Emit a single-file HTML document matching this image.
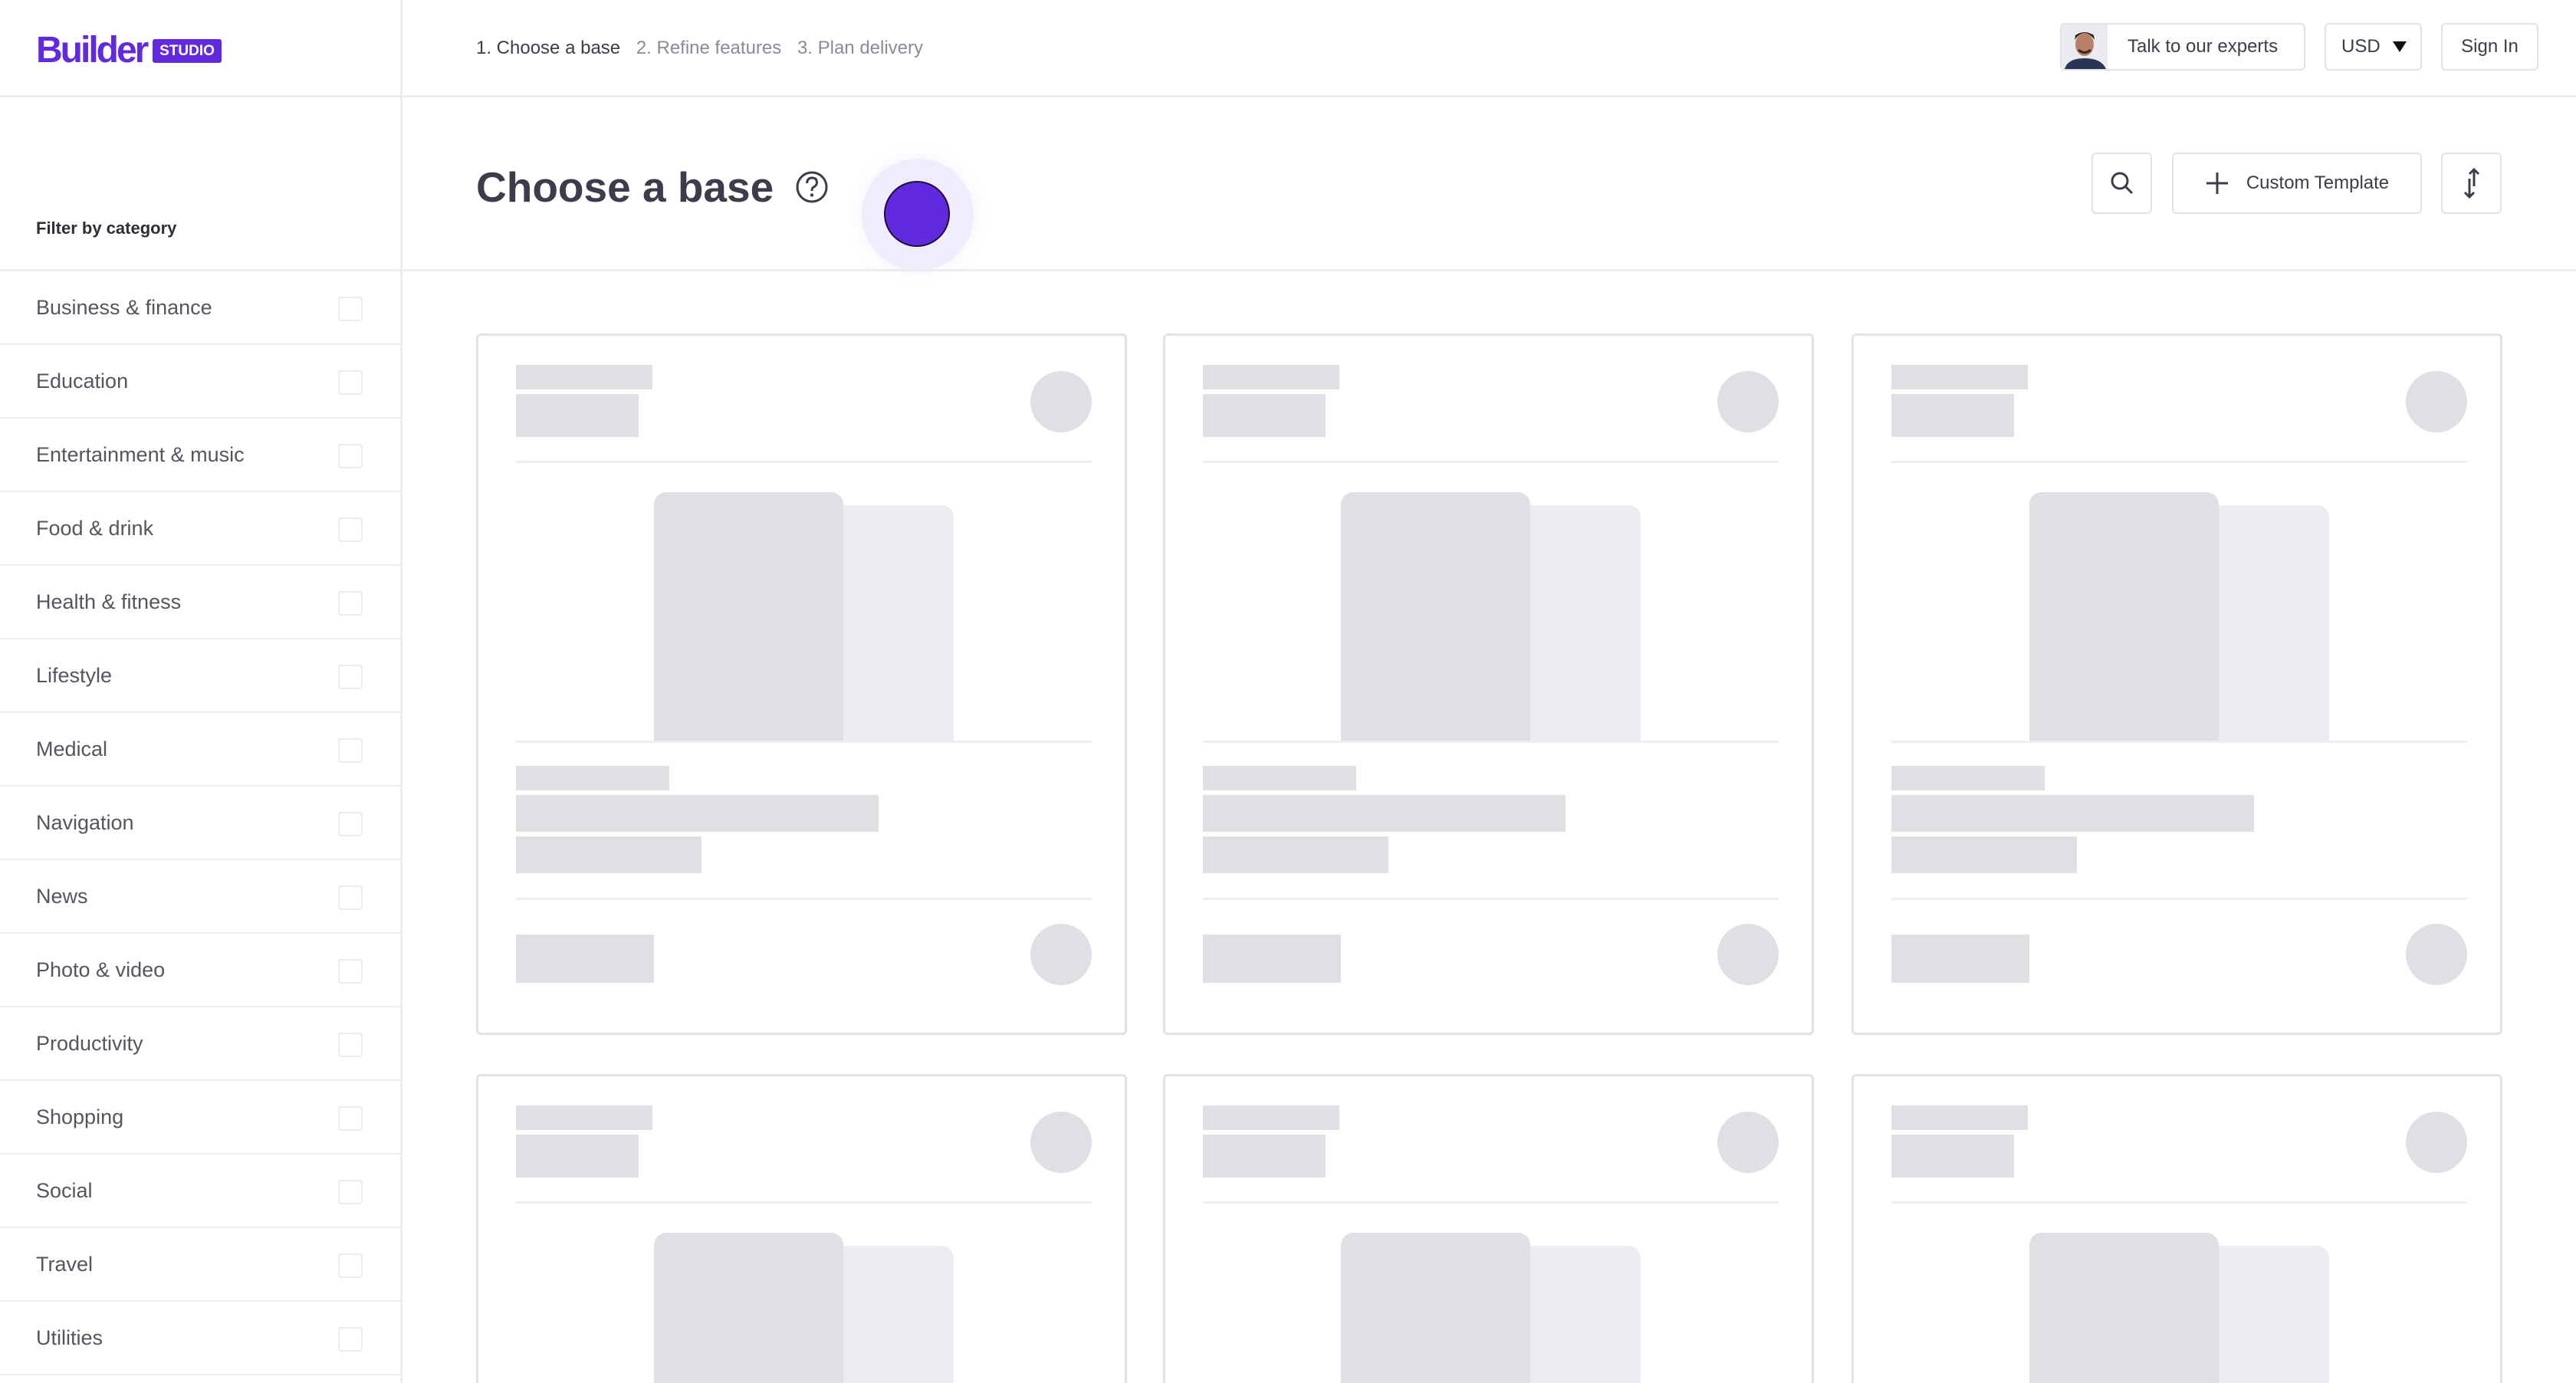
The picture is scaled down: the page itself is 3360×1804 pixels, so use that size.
<!DOCTYPE html>
<html><head><meta charset="utf-8"><style>
*{margin:0;padding:0;box-sizing:border-box}
html,body{width:3360px;height:1804px;overflow:hidden;background:#fff}
body{font-family:"Liberation Sans",sans-serif;color:#3c3c4a}
#wrap{position:relative;width:3360px;height:1804px;overflow:hidden}
.a{position:absolute}
.hl{position:absolute;left:0;width:3360px;height:3px;background:#ebebf0}
.btn{position:absolute;border:2px solid #e1e1e7;border-radius:6px;background:#fff;display:flex;align-items:center;justify-content:center;font-size:24px;color:#3c3c4a}
.row{position:absolute;left:0;width:523px;height:96px;border-bottom:2px solid #ebebf0}
.row span{position:absolute;left:47px;top:32px;font-size:27px;color:#55555f}
.row i{position:absolute;left:441px;top:33px;width:32px;height:32px;border:2px solid #ebebf0;border-radius:4px}
.card{position:absolute;width:849px;height:915px;border:3px solid #e1e1e7;border-radius:6px;background:#fff;overflow:hidden}
.p{position:absolute;background:#dfdfe4}
.c{position:absolute;background:#dfdfe4;border-radius:50%;width:80px;height:80px}
.d{position:absolute;left:49px;width:751px;height:3px;background:#eeeef2}
</style></head><body><div id="wrap">
<div class="a" style="left:47px;top:38px;font-size:48px;font-weight:bold;color:#6129e0;letter-spacing:-3px">Builder</div>
<div class="a" style="left:199px;top:51px;width:90px;height:31px;background:#6129e0;border-radius:3px;color:#fff;font-size:19px;font-weight:bold;text-align:center;line-height:31px">STUDIO</div>
<div class="a" style="left:621px;top:49px;font-size:24px;color:#3c3c4a">1. Choose a base <span style="color:#8a8a99;margin-left:14px">2. Refine features</span> <span style="color:#8a8a99;margin-left:14px">3. Plan delivery</span></div>
<div class="btn" style="left:2687px;top:30px;width:320px;height:62px;justify-content:flex-start;overflow:hidden">
<svg width="60" height="58" viewBox="0 0 60 58" style="flex:none"><rect width="60" height="58" fill="#e9ebf0"/><path d="M4 58 Q8 44 30 44 Q52 44 58 58Z" fill="#2a3456"/><ellipse cx="30" cy="26" rx="12" ry="15" fill="#b88068"/><path d="M17 20 Q30 2 43 20 L42 14 Q30 6 18 14Z" fill="#2b2220"/><path d="M22 33 Q30 40 38 33" stroke="#3a2a22" stroke-width="3" fill="none"/></svg>
<span style="margin-left:26px">Talk to our experts</span></div>
<div class="btn" style="left:3032px;top:30px;width:127px;height:62px;justify-content:flex-start;padding-left:20px">USD<span style="position:absolute;right:18px;top:22px;border-left:9px solid transparent;border-right:9px solid transparent;border-top:14px solid #111"></span></div>
<div class="btn" style="left:3184px;top:30px;width:127px;height:62px">Sign In</div>
<div class="hl" style="top:124px"></div>
<div class="a" style="left:522px;top:0;width:3px;height:1804px;background:#ebebf0"></div>
<div class="a" style="left:621px;top:212px;font-size:55px;font-weight:bold;color:#3c3c4a">Choose a base</div>
<svg class="a" style="left:1037px;top:222px" width="44" height="44" viewBox="0 0 44 44"><circle cx="22" cy="22" r="19" fill="none" stroke="#3c3c4a" stroke-width="3"/><path d="M15.5 17 Q16 10 22 10 Q28.5 10 28.5 16 Q28.5 20 23.5 22.5 Q22 23.5 22 27" fill="none" stroke="#3c3c4a" stroke-width="3"/><circle cx="22" cy="32.5" r="2.2" fill="#3c3c4a"/></svg>
<div class="a" style="left:1124px;top:207px;width:146px;height:146px;border-radius:50%;background:#f1ecfb;box-shadow:0 0 30px #f4f0fc"></div>
<div class="a" style="left:1153px;top:236px;width:86px;height:86px;border-radius:50%;background:#6129e0;border:2px solid #1a1030"></div>
<div class="btn" style="left:2728px;top:199px;width:79px;height:80px"><svg width="34" height="34" viewBox="0 0 34 34"><circle cx="14" cy="14" r="10" fill="none" stroke="#3c3c4a" stroke-width="3"/><path d="M21 21 L30 30" stroke="#3c3c4a" stroke-width="3"/></svg></div>
<div class="btn" style="left:2833px;top:199px;width:326px;height:80px"><svg width="32" height="32" viewBox="0 0 32 32" style="margin-right:22px"><path d="M16 2V30M2 16H30" stroke="#3c3c4a" stroke-width="3"/></svg>Custom Template</div>
<div class="btn" style="left:3184px;top:199px;width:79px;height:80px"><svg width="30" height="44" viewBox="0 0 30 44"><path d="M18 4V26M12 10L18 4L24 10M12 16V40M6 34L12 40L18 34" stroke="#3c3c4a" stroke-width="3" fill="none"/></svg></div>
<div class="hl" style="top:351px"></div>
<div class="a" style="left:47px;top:285px;font-size:22px;font-weight:bold;color:#2e2e38">Filter by category</div>
<div class="row" style="top:354px"><span>Business &amp; finance</span><i></i></div>
<div class="row" style="top:450px"><span>Education</span><i></i></div>
<div class="row" style="top:546px"><span>Entertainment &amp; music</span><i></i></div>
<div class="row" style="top:642px"><span>Food &amp; drink</span><i></i></div>
<div class="row" style="top:738px"><span>Health &amp; fitness</span><i></i></div>
<div class="row" style="top:834px"><span>Lifestyle</span><i></i></div>
<div class="row" style="top:930px"><span>Medical</span><i></i></div>
<div class="row" style="top:1026px"><span>Navigation</span><i></i></div>
<div class="row" style="top:1122px"><span>News</span><i></i></div>
<div class="row" style="top:1218px"><span>Photo &amp; video</span><i></i></div>
<div class="row" style="top:1314px"><span>Productivity</span><i></i></div>
<div class="row" style="top:1410px"><span>Shopping</span><i></i></div>
<div class="row" style="top:1506px"><span>Social</span><i></i></div>
<div class="row" style="top:1602px"><span>Travel</span><i></i></div>
<div class="row" style="top:1698px"><span>Utilities</span><i></i></div>
<div id="cards"></div>
</div>
<script>
var xs=[621,1517,2415],ys=[435,1401],h='';
ys.forEach(function(y){xs.forEach(function(x){
var st=(y>1000)?'height:403px;border-bottom:none;border-radius:6px 6px 0 0;':'';
h+='<div class="card" style="'+st+'left:'+x+'px;top:'+y+'px">'+
'<div class="p" style="left:49px;top:38px;width:178px;height:32px"></div>'+
'<div class="p" style="left:49px;top:76px;width:160px;height:56px"></div>'+
'<div class="c" style="left:720px;top:46px"></div>'+
'<div class="d" style="top:163px"></div>'+
'<div class="p" style="left:460px;top:221px;width:160px;height:310px;background:#ebebf0;border-radius:16px 16px 0 0"></div>'+
'<div class="p" style="left:229px;top:204px;width:247px;height:327px;border-radius:16px 16px 0 0"></div>'+
'<div class="d" style="top:528px"></div>'+
'<div class="p" style="left:49px;top:561px;width:200px;height:32px"></div>'+
'<div class="p" style="left:49px;top:599px;width:473px;height:48px"></div>'+
'<div class="p" style="left:49px;top:653px;width:242px;height:48px"></div>'+
'<div class="d" style="top:733px"></div>'+
'<div class="p" style="left:49px;top:781px;width:180px;height:63px"></div>'+
'<div class="c" style="left:720px;top:767px"></div>'+
'</div>';});});
document.getElementById('cards').innerHTML=h;
</script>
</body></html>
